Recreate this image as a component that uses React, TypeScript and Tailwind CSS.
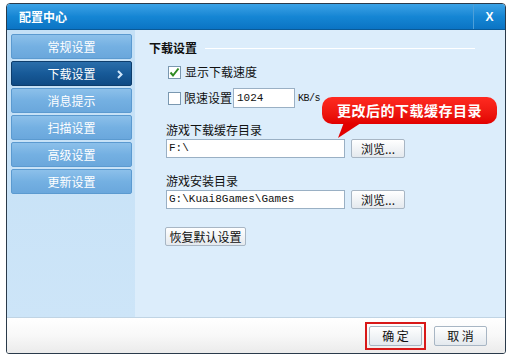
import React from "react";

const font = { fontFamily: '"Noto Sans CJK SC", "Noto Sans", sans-serif' };
const mono = { fontFamily: '"Liberation Mono", monospace' };

function Check({ checked }: { checked?: boolean }) {
  return (
    <div className="w-[13px] h-[13px] border border-[#7a98b0] bg-white flex items-center justify-center">
      {checked && (
        <svg width="11" height="11" viewBox="0 0 11 11">
          <path d="M1.5 5.5 L4 8.5 L9.5 1.5" stroke="#2f8a22" strokeWidth="2" fill="none" />
        </svg>
      )}
    </div>
  );
}

function Btn({ children, className = "" }: { children: React.ReactNode; className?: string }) {
  return (
    <div
      className={
        "h-[19px] border border-[#a8b6c4] rounded-[2px] bg-gradient-to-b from-white to-[#e4e9ee] text-[12px] text-[#111] flex items-center justify-center leading-none " +
        className
      }
    >
      {children}
    </div>
  );
}

export default function App() {
  const items = ["常规设置", "下载设置", "消息提示", "扫描设置", "高级设置", "更新设置"];
  return (
    <div className="w-[513px] h-[356px] bg-white relative" style={font}>
      <div className="absolute left-[6px] top-[3px] w-[500px] h-[351px] border border-[#2a3a4a] rounded-t-[4px] rounded-b-[3px] flex flex-col overflow-hidden">
        {/* title bar */}
        <div className="h-[25px] flex items-stretch bg-gradient-to-b from-[#3aa2e6] via-[#1586d4] to-[#0b74c4]">
          <div className="flex-1 flex items-center pl-[12px] text-white font-bold text-[12px]">配置中心</div>
          <div
            className="w-[32px] border-l border-[#4d9fd8] flex items-center justify-center text-white font-bold text-[12px]"
            style={{ fontFamily: '"Liberation Sans", sans-serif' }}
          >
            X
          </div>
        </div>
        <div className="h-[1px] bg-[#0a5a98]" />
        {/* body */}
        <div className="flex flex-1 min-h-0">
          {/* sidebar */}
          <div className="w-[128px] bg-gradient-to-b from-[#c4e0f6] to-[#cde5f8] pt-[4px] pl-[4px] pr-[3px] flex flex-col gap-[2px]">
            {items.map((t, i) =>
              i === 1 ? (
                <div
                  key={t}
                  className="h-[25px] rounded-[2px] border border-[#0d3d6c] bg-gradient-to-b from-[#2a6eab] via-[#175a98] to-[#0f4a84] text-white text-[12px] flex items-center justify-center relative"
                >
                  下载设置
                  <svg className="absolute right-[8px] top-[8px]" width="6" height="9" viewBox="0 0 6 9">
                    <path d="M1 1 L4.5 4.5 L1 8" stroke="#cfe6fb" strokeWidth="2" fill="none" />
                  </svg>
                </div>
              ) : (
                <div
                  key={t}
                  className="h-[25px] rounded-[2px] border border-[#5b9ad0] bg-gradient-to-b from-[#8cc0ea] via-[#74b0e2] to-[#6aa7dc] text-white text-[12px] flex items-center justify-center"
                >
                  {t}
                </div>
              )
            )}
          </div>
          {/* content */}
          <div className="flex-1 bg-[#dcedfb] relative pl-[14px] pt-[10px] text-[12px] text-[#111]">
            <div className="flex items-center gap-[8px] h-[16px]">
              <span className="font-bold">下载设置</span>
              <div className="w-[270px] h-[1px] bg-[#a8c8e2] border-b border-white" />
            </div>
            <div className="pl-[19px] mt-[8px] flex items-center gap-[4px] h-[16px]">
              <Check checked />
              <span>显示下载速度</span>
            </div>
            <div className="pl-[19px] mt-[8px] flex items-center h-[20px]">
              <Check />
              <span className="ml-[3px]">限速设置</span>
              <div className="ml-[1px] w-[62px] h-[20px] border border-[#9ab0c4] bg-white flex items-center pl-[3px] text-[11px]" style={mono}>
                1024
              </div>
              <span className="ml-[3px] text-[10px] tracking-[-0.5px]" style={mono}>
                KB/s
              </span>
            </div>
            <div className="pl-[17px] mt-[13px]">游戏下载缓存目录</div>
            <div className="pl-[17px] flex items-center gap-[6px]">
              <div className="w-[179px] h-[19px] border border-[#9ab0c4] bg-white flex items-center pl-[2px] text-[11px]" style={mono}>
                F:\
              </div>
              <Btn className="w-[54px]">浏览...</Btn>
            </div>
            <div className="pl-[17px] mt-[14px]">游戏安装目录</div>
            <div className="pl-[17px] flex items-center gap-[6px]">
              <div className="w-[179px] h-[19px] border border-[#9ab0c4] bg-white flex items-center pl-[2px] text-[11px]" style={mono}>
                G:\Kuai8Games\Games
              </div>
              <Btn className="w-[54px]">浏览...</Btn>
            </div>
            <div className="pl-[16px] mt-[18px]">
              <Btn className="w-[81px]">恢复默认设置</Btn>
            </div>
            {/* red callout */}
            <div className="absolute left-[187px] top-[67px]">
              <svg className="absolute left-0 top-0" width="60" height="45" viewBox="0 0 60 45">
                <path d="M24 20 L48 20 L16 41 Z" fill="#e20000" />
              </svg>
              <div className="relative w-[175px] h-[27px] rounded-[10px] bg-gradient-to-b from-[#ff2a20] to-[#e20000] text-white font-bold text-[14px] flex items-center justify-center tracking-[0.5px]">
                更改后的下载缓存目录
              </div>
            </div>
          </div>
        </div>
        {/* footer */}
        <div className="h-[36px] border-t border-[#c0d4e4] bg-gradient-to-b from-white via-[#f8f8f8] to-[#ebebeb] flex items-center justify-end pr-[18px] gap-[8px]">
          <div className="border-2 border-[#d81818] p-[2px]">
            <Btn className="w-[53px] h-[20px]">确 定</Btn>
          </div>
          <Btn className="w-[53px] h-[20px]">取 消</Btn>
        </div>
      </div>
    </div>
  );
}
